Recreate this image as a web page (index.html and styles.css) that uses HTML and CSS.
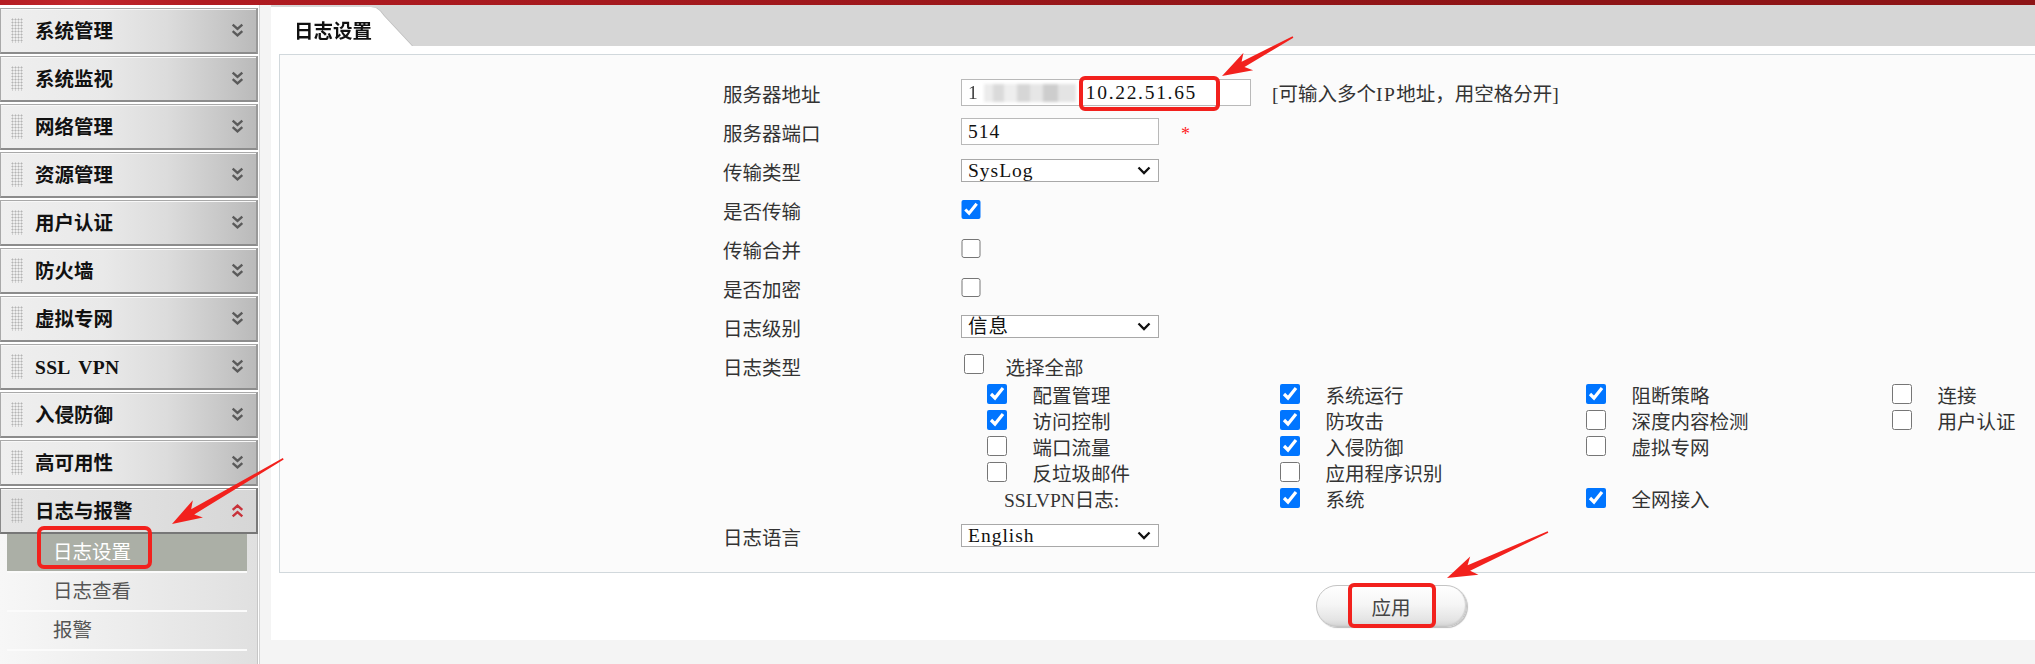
FILE: index.html
```html
<!DOCTYPE html>
<html lang="zh-CN">
<head>
<meta charset="utf-8">
<title>日志设置</title>
<link rel="stylesheet" href="styles.css">
</head>
<body>
<div class="topbar"></div>
<div class="main">
  <aside class="sidebar">
    <nav class="menu">
      <div class="menu-item"><span class="grip"></span><span class="menu-label">系统管理</span><svg class="chev" viewBox="0 0 12 14"><path d="M1.5 1.5 L6 5.5 L10.5 1.5 M1.5 7.5 L6 11.5 L10.5 7.5"/></svg></div>
      <div class="menu-item"><span class="grip"></span><span class="menu-label">系统监视</span><svg class="chev" viewBox="0 0 12 14"><path d="M1.5 1.5 L6 5.5 L10.5 1.5 M1.5 7.5 L6 11.5 L10.5 7.5"/></svg></div>
      <div class="menu-item"><span class="grip"></span><span class="menu-label">网络管理</span><svg class="chev" viewBox="0 0 12 14"><path d="M1.5 1.5 L6 5.5 L10.5 1.5 M1.5 7.5 L6 11.5 L10.5 7.5"/></svg></div>
      <div class="menu-item"><span class="grip"></span><span class="menu-label">资源管理</span><svg class="chev" viewBox="0 0 12 14"><path d="M1.5 1.5 L6 5.5 L10.5 1.5 M1.5 7.5 L6 11.5 L10.5 7.5"/></svg></div>
      <div class="menu-item"><span class="grip"></span><span class="menu-label">用户认证</span><svg class="chev" viewBox="0 0 12 14"><path d="M1.5 1.5 L6 5.5 L10.5 1.5 M1.5 7.5 L6 11.5 L10.5 7.5"/></svg></div>
      <div class="menu-item"><span class="grip"></span><span class="menu-label">防火墙</span><svg class="chev" viewBox="0 0 12 14"><path d="M1.5 1.5 L6 5.5 L10.5 1.5 M1.5 7.5 L6 11.5 L10.5 7.5"/></svg></div>
      <div class="menu-item"><span class="grip"></span><span class="menu-label">虚拟专网</span><svg class="chev" viewBox="0 0 12 14"><path d="M1.5 1.5 L6 5.5 L10.5 1.5 M1.5 7.5 L6 11.5 L10.5 7.5"/></svg></div>
      <div class="menu-item"><span class="grip"></span><span class="menu-label latin">SSL VPN</span><svg class="chev" viewBox="0 0 12 14"><path d="M1.5 1.5 L6 5.5 L10.5 1.5 M1.5 7.5 L6 11.5 L10.5 7.5"/></svg></div>
      <div class="menu-item"><span class="grip"></span><span class="menu-label">入侵防御</span><svg class="chev" viewBox="0 0 12 14"><path d="M1.5 1.5 L6 5.5 L10.5 1.5 M1.5 7.5 L6 11.5 L10.5 7.5"/></svg></div>
      <div class="menu-item"><span class="grip"></span><span class="menu-label">高可用性</span><svg class="chev" viewBox="0 0 12 14"><path d="M1.5 1.5 L6 5.5 L10.5 1.5 M1.5 7.5 L6 11.5 L10.5 7.5"/></svg></div>
      <div class="menu-item active"><span class="grip"></span><span class="menu-label">日志与报警</span><svg class="chev up" viewBox="0 0 12 14"><path d="M1.5 6.5 L6 2.5 L10.5 6.5 M1.5 12.5 L6 8.5 L10.5 12.5"/></svg></div>
      <div class="submenu">
        <div class="sub-item selected">日志设置</div>
        <div class="sub-item">日志查看</div>
        <div class="sub-item">报警</div>
      </div>
    </nav>
  </aside>

  <section class="content">
    <div class="panel">
      <div class="tabbar">
        <div class="tab-wrap"><div class="tab">日志设置</div></div>
      </div>

      <div class="formbox">
        <div class="form">
          <div class="lbl">服务器地址</div>
          <div class="val">
            <div class="inp inp-wide"><span class="mask-one">1</span><span class="mask"></span><span class="ip">10.22.51.65</span></div>
            <span class="hint">[可输入多个<span class="lat">IP</span>地址，用空格分开]</span>
          </div>

          <div class="lbl">服务器端口</div>
          <div class="val"><input class="inp inp-port" type="text" value="514"><span class="req">*</span></div>

          <div class="lbl">传输类型</div>
          <div class="val"><div class="sel"><select><option>SysLog</option></select><svg class="caret" viewBox="0 0 14 9"><path d="M1.5 1.5 L7 7 L12.5 1.5"/></svg></div></div>

          <div class="lbl">是否传输</div>
          <div class="val"><input class="cb" type="checkbox" checked></div>

          <div class="lbl">传输合并</div>
          <div class="val"><input class="cb" type="checkbox"></div>

          <div class="lbl">是否加密</div>
          <div class="val"><input class="cb" type="checkbox"></div>

          <div class="lbl">日志级别</div>
          <div class="val"><div class="sel"><select><option>信息</option></select><svg class="caret" viewBox="0 0 14 9"><path d="M1.5 1.5 L7 7 L12.5 1.5"/></svg></div></div>

          <div class="lbl lbl-top">日志类型</div>
          <div class="val val-types">
            <label class="selall"><input class="cb" type="checkbox"><span>选择全部</span></label>
            <div class="types">
              <label class="opt"><input class="cb" type="checkbox" checked><span>配置管理</span></label>
              <label class="opt"><input class="cb" type="checkbox" checked><span>系统运行</span></label>
              <label class="opt"><input class="cb" type="checkbox" checked><span>阻断策略</span></label>
              <label class="opt"><input class="cb" type="checkbox"><span>连接</span></label>

              <label class="opt"><input class="cb" type="checkbox" checked><span>访问控制</span></label>
              <label class="opt"><input class="cb" type="checkbox" checked><span>防攻击</span></label>
              <label class="opt"><input class="cb" type="checkbox"><span>深度内容检测</span></label>
              <label class="opt"><input class="cb" type="checkbox"><span>用户认证</span></label>

              <label class="opt"><input class="cb" type="checkbox"><span>端口流量</span></label>
              <label class="opt"><input class="cb" type="checkbox" checked><span>入侵防御</span></label>
              <label class="opt"><input class="cb" type="checkbox"><span>虚拟专网</span></label>
              <span class="opt"></span>

              <label class="opt"><input class="cb" type="checkbox"><span>反垃圾邮件</span></label>
              <label class="opt"><input class="cb" type="checkbox"><span>应用程序识别</span></label>
              <span class="opt"></span>
              <span class="opt"></span>

              <span class="opt ssl">SSLVPN日志:</span>
              <label class="opt"><input class="cb" type="checkbox" checked><span>系统</span></label>
              <label class="opt"><input class="cb" type="checkbox" checked><span>全网接入</span></label>
              <span class="opt"></span>
            </div>
          </div>

          <div class="lbl">日志语言</div>
          <div class="val"><div class="sel"><select><option>English</option></select><svg class="caret" viewBox="0 0 14 9"><path d="M1.5 1.5 L7 7 L12.5 1.5"/></svg></div></div>
        </div>
      </div>

      <div class="actions"><button class="btn" type="button">应用</button></div>
    </div>
  </section>
</div>

<svg class="annot" viewBox="0 0 2035 664">
  <g class="mark">
    <rect x="39" y="528" width="111" height="39" rx="5"/>
    <rect x="1081" y="78" width="137" height="31" rx="4"/>
    <rect x="1350" y="585" width="84" height="41" rx="4"/>
  </g>
  <g class="arrow">
    <polygon transform="translate(172 524) rotate(149.6)" points="-129,-0.8 -24,-3 -30,-10 0,0 -30,10 -24,3 -129,0.8"/>
    <polygon transform="translate(1222 76) rotate(151.2)" points="-81,-0.8 -24,-3 -30,-10 0,0 -30,10 -24,3 -81,0.8"/>
    <polygon transform="translate(1447 578) rotate(155.5)" points="-111,-0.8 -24,-3 -30,-10 0,0 -30,10 -24,3 -111,0.8"/>
  </g>
</svg>
</body>
</html>
```

FILE: styles.css
```css
html, body {
  margin: 0;
  padding: 0;
}

body {
  width: 2035px;
  height: 664px;
  overflow: hidden;
  position: relative;
  background: #f4f4f4;
  font-family: "Liberation Serif", "Noto Sans CJK SC", serif;
  font-size: 19.5px;
  color: #333;
}

.topbar {
  height: 5px;
  background: linear-gradient(90deg, #b51d23 0%, #c2272d 4%, #b01b21 10%, #a5191e 30%, #961619 55%, #8e1416 75%, #8d1416 100%);
}

.main {
  display: flex;
  width: 2511px;
  height: 659px;
}

/* ---------- sidebar ---------- */
.sidebar {
  width: 271px;
  flex-shrink: 0;
  background: #f4f4f4;
  display: flex;
}

.menu {
  width: 258px;
  padding-top: 3px;
  display: flex;
  flex-direction: column;
  box-shadow: 1px 0 0 #ffffff, 2px 0 0 #d4d4d4;
  background: #ffffff;
}

.menu-item {
  box-sizing: border-box;
  width: 258px;
  height: 46px;
  margin-bottom: 2px;
  display: flex;
  align-items: center;
  border: 1px solid #a9a9a9;
  border-right: 2px solid #999999;
  border-bottom: 2px solid #8c8c8c;
  background: linear-gradient(90deg, #efefef 0%, #e9e9e9 40%, #dcdcdc 65%, #c9c9c9 85%, #bababa 100%);
  box-shadow: inset 0 1px 0 #f8f8f8;
}

.menu-item.active {
  background: linear-gradient(90deg, #e6e6e6 0%, #e0e0e0 50%, #d6d6d6 100%);
  border-color: #8a8a8a;
  border-right-color: #7a7a7a;
  border-bottom-color: #777777;
  margin-bottom: 0;
}

.grip {
  width: 12px;
  height: 25px;
  margin-left: 10px;
  background-image: radial-gradient(circle, #b4b4b4 0.9px, transparent 1.1px);
  background-size: 3px 3px;
  flex-shrink: 0;
}

.menu-label {
  margin-left: 12px;
  padding-top: 2px;
  font-weight: 700;
  color: #111;
  line-height: 24px;
}

.menu-label.latin {
  letter-spacing: 0.3px;
  word-spacing: 4px;
}

.chev {
  width: 13px;
  height: 15px;
  margin-left: auto;
  margin-right: 12px;
  fill: none;
  stroke: #5a5a5a;
  stroke-width: 2.2;
}

.chev.up {
  stroke: #c8323a;
}

.submenu {
  flex: 1;
  box-sizing: border-box;
  width: 258px;
  background: linear-gradient(90deg, #f7f7f7 0%, #ececec 50%, #e0e0e0 100%);
  border-right: 1px solid #c6c6c6;
}

.sub-item {
  height: 37px;
  margin: 0 10px 0 7px;
  border-bottom: 2px solid #fbfbfb;
  display: flex;
  align-items: center;
  padding-left: 46px;
  color: #555;
  line-height: 24px;
}

.sub-item.selected {
  background: #abafa6;
  color: #ffffff;
}

/* ---------- content ---------- */
.content {
  width: 2240px;
  flex-shrink: 0;
  background: #f4f4f4;
}

.panel {
  background: #ffffff;
}

.tabbar {
  box-sizing: border-box;
  height: 41px;
  padding-top: 2px;
  background: #d6d6d6;
}

.tab-wrap {
  width: 142px;
  height: 39px;
  filter: drop-shadow(1px 0 0 #bdbdbd);
}

.tab {
  box-sizing: border-box;
  height: 39px;
  width: 141px;
  padding: 5px 0 0 23px;
  display: flex;
  align-items: center;
  background: #ffffff;
  clip-path: polygon(0 0, 100px 0, 105px 1px, 109px 4px, 113px 9px, 141px 39px, 0 39px);
  font-weight: 700;
  color: #111;
}

.formbox {
  margin: 8px 8px 0 8px;
  border: 1px solid #d1d8dc;
  background: #fbfbfb;
  padding: 18px 0 17px;
}

.form {
  display: grid;
  grid-template-columns: 238px 1098px;
  justify-content: center;
}

.lbl {
  height: 39px;
  display: flex;
  align-items: center;
  color: #333;
  padding-top: 1px;
  box-sizing: border-box;
}

.lbl-top {
  align-self: start;
}

.val {
  height: 39px;
  display: flex;
  align-items: center;
}

.inp {
  box-sizing: border-box;
  height: 27px;
  border: 1px solid #b9b9b9;
  background: #ffffff;
  padding: 0 6px;
  font-family: "Liberation Serif", "Noto Sans CJK SC", serif;
  font-size: 19.5px;
  letter-spacing: 1px;
  color: #111;
  display: flex;
  align-items: center;
  margin: 0;
  outline: none;
}

.inp-wide {
  width: 290px;
  white-space: nowrap;
  overflow: hidden;
}

.inp-port {
  width: 198px;
}

.mask-one {
  filter: blur(0.7px);
  color: #444;
}

.mask {
  display: inline-block;
  width: 92px;
  height: 18px;
  margin-left: 5px;
  background: linear-gradient(90deg, #ececec 0 10%, #dadada 10% 22%, #eeeeee 22% 36%, #d6d6d6 36% 50%, #e6e6e6 50% 64%, #cdcdcd 64% 80%, #e4e4e4 80% 100%);
  filter: blur(1.6px);
}

.ip {
  margin-left: 10px;
  letter-spacing: 1.7px;
  color: #111;
}

.hint {
  margin-left: 21px;
  color: #333;
}

.hint .lat {
  letter-spacing: 1.5px;
}

.req {
  margin-left: 22px;
  padding-top: 6px;
  color: #ff2222;
  font-size: 18px;
}

.sel {
  position: relative;
  box-sizing: border-box;
  width: 198px;
  height: 23px;
  border: 1px solid #a8a8a8;
  background: #ffffff;
}

.sel select {
  -webkit-appearance: none;
  appearance: none;
  width: 100%;
  height: 100%;
  border: none;
  background: transparent;
  padding: 0 0 0 6px;
  margin: 0;
  font-family: "Liberation Serif", "Noto Sans CJK SC", serif;
  font-size: 19.5px;
  letter-spacing: 1px;
  line-height: 21px;
  color: #111;
  outline: none;
}

.caret {
  position: absolute;
  right: 7px;
  top: 6px;
  width: 14px;
  height: 9px;
  fill: none;
  stroke: #111;
  stroke-width: 2.3;
  pointer-events: none;
}

.cb {
  width: 19.5px;
  height: 19.5px;
  margin: 0;
  accent-color: #0075ff;
  flex-shrink: 0;
}

.val-types {
  height: auto;
  flex-direction: column;
  align-items: stretch;
  padding: 5px 0 5px;
}

.selall {
  height: 26px;
  display: flex;
  align-items: center;
  padding-left: 3px;
}

.selall span {
  margin-left: 22px;
  padding-top: 4px;
}

.types {
  margin-top: 4px;
  padding-left: 26px;
  display: grid;
  grid-template-columns: 293px 306px 306px 141px;
  grid-auto-rows: 26px;
}

.opt {
  display: flex;
  align-items: center;
  gap: 26px;
  white-space: nowrap;
}

.opt span {
  padding-top: 1px;
}

.opt.ssl {
  padding-left: 17px;
}

.actions {
  display: flex;
  justify-content: center;
  padding: 12px 0 13px;
}

.btn {
  box-sizing: border-box;
  width: 151px;
  height: 42px;
  border: 1px solid #c4c4c4;
  border-radius: 21px;
  background: linear-gradient(180deg, #ffffff 0%, #f6f6f6 45%, #e4e4e4 85%, #d4d4d4 100%);
  box-shadow: 1px 1px 1px #bdbdbd, inset -1px -1px 1px #d0d0d0;
  font-family: "Liberation Serif", "Noto Sans CJK SC", serif;
  font-size: 19.5px;
  color: #444;
  padding: 0;
}

/* ---------- annotations ---------- */
.annot {
  position: absolute;
  left: 0;
  top: 0;
  width: 2035px;
  height: 664px;
  pointer-events: none;
}

.mark rect {
  fill: none;
  stroke: #f2211d;
  stroke-width: 4;
}

.arrow polygon {
  fill: #f2211d;
}
```
